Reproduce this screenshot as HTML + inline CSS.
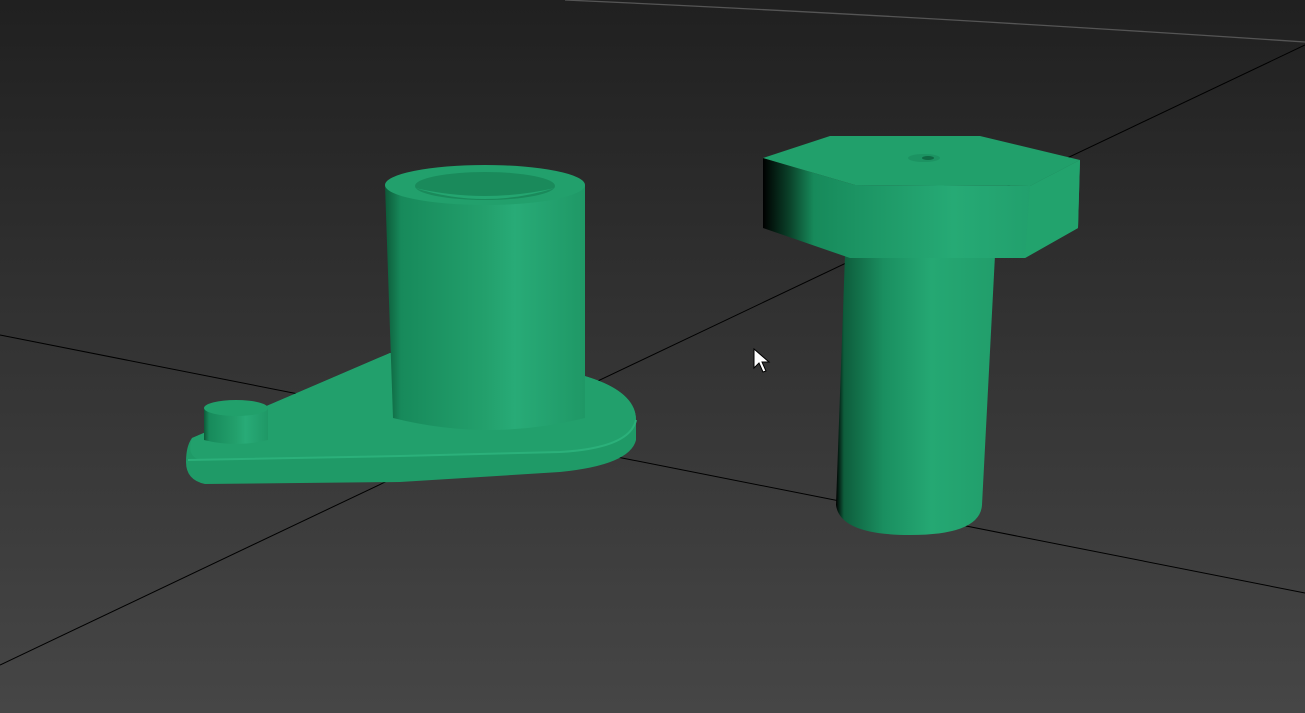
<!DOCTYPE html>
<html><head><style>html,body{margin:0;padding:0;width:1305px;height:713px;overflow:hidden;background:#333}</style></head>
<body>
<svg width="1305" height="713" viewBox="0 0 1305 713" xmlns="http://www.w3.org/2000/svg">
<defs>
<linearGradient id="bg" x1="0" y1="0" x2="0" y2="1">
<stop offset="0" stop-color="#202020"/><stop offset="0.4" stop-color="#303030"/><stop offset="1" stop-color="#464646"/></linearGradient>
<linearGradient id="cyl" x1="0" y1="0" x2="1" y2="0">
<stop offset="0" stop-color="#0d5a39"/><stop offset="0.08" stop-color="#178a5b"/><stop offset="0.5" stop-color="#23a06c"/><stop offset="0.65" stop-color="#28ab77"/><stop offset="1" stop-color="#1f9866"/></linearGradient>
<linearGradient id="shaft" x1="0" y1="0" x2="1" y2="0">
<stop offset="0" stop-color="#000"/><stop offset="0.05" stop-color="#0e5d3c"/><stop offset="0.3" stop-color="#1a8f60"/><stop offset="0.6" stop-color="#25a873"/><stop offset="1" stop-color="#219e6b"/></linearGradient>
<linearGradient id="hexs" x1="0" y1="0" x2="1" y2="0">
<stop offset="0" stop-color="#000"/><stop offset="0.08" stop-color="#0a3f28"/><stop offset="0.16" stop-color="#178a5b"/><stop offset="0.6" stop-color="#26aa75"/><stop offset="1" stop-color="#1f9a68"/></linearGradient>
</defs>
<rect width="1305" height="713" fill="url(#bg)"/>
<path d="M565 0 Q900 15 1305 42" stroke="#555" stroke-width="1.3" fill="none"/>
<line x1="0" y1="335" x2="1305" y2="593" stroke="#000" stroke-width="1"/>
<line x1="0" y1="665" x2="1305" y2="45" stroke="#000" stroke-width="1"/>
<path d="M192 438 L390 353 L560 370 Q636 385 636 420 L636 440 Q630 465 560 472 L400 482 L205 484 Q186 480 186 462 Q186 446 192 438 Z" fill="#1f9a67"/>
<path d="M192 438 L390 353 L560 370 Q636 385 636 420 Q630 448 560 452 L400 456 L200 460 Q186 456 192 438 Z" fill="#22a06c"/>
<path d="M188 460 L400 456 L560 452 Q630 448 636 420" stroke="#2bb07a" stroke-width="2" fill="none"/>
<path d="M204 408 L204 440 Q236 448 268 440 L268 408 Z" fill="url(#cyl)"/>
<ellipse cx="236" cy="408" rx="32" ry="8" fill="#21a06b"/>
<path d="M385 185 L393 418 Q489 442 585 418 L585 185 Z" fill="url(#cyl)"/>
<ellipse cx="485" cy="185" rx="100" ry="20" fill="#22a06c"/>
<ellipse cx="485" cy="186" rx="70" ry="14" fill="#1a8a5b"/>
<path d="M415 188 Q485 210 555 188 Q485 204 415 188 Z" fill="#24a570"/>
<path d="M845 255 L836 505 Q840 535 910 535 Q980 535 982 505 L995 255 Z" fill="url(#shaft)"/>
<path d="M763 158 L855 185 L1030 186 L1080 160 L1078 228 L1025 258 L850 258 L763 228 Z" fill="url(#hexs)"/>
<path d="M1030 186 L1080 160 L1078 228 L1025 258 Z" fill="#22a36d"/>
<path d="M763 158 L830 136 L980 136 L1080 160 L1030 186 L855 185 Z" fill="#21a06b"/>
<ellipse cx="924" cy="158" rx="16" ry="4" fill="#1c9362"/>
<ellipse cx="928" cy="158" rx="6" ry="2" fill="#0f6a44"/>
<path d="M754 349 L754 368 L759 363 L763 372 L766 371 L762 362 L769 362 Z" fill="#fff" stroke="#000" stroke-width="1"/>
</svg>
</body></html>
